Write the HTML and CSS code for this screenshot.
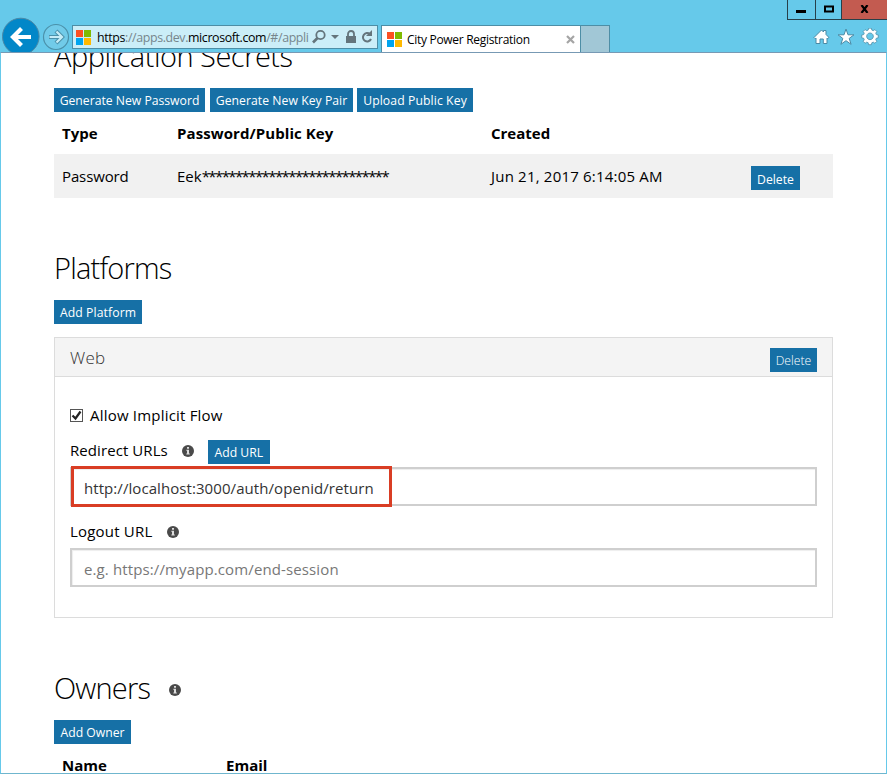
FILE: index.html
```
<!DOCTYPE html>
<html lang="en">
<head>
<meta charset="utf-8">
<title>City Power Registration</title>
<link rel="stylesheet" href="styles.css">
</head>
<body>
<svg width="0" height="0" class="defs">
  <symbol id="info" viewBox="0 0 12 12"><circle cx="6" cy="6" r="6" fill="#4a4a4a"/><path d="M5 2h2v1.700H5zM4.300 4.800H7v3.700h.8v1H4.300v-1H5V5.800h-.7z" fill="#ddd"/></symbol>
  <symbol id="ms" viewBox="0 0 15 15"><path fill="#fb5022" d="M0 0h7v7H0z"/><path fill="#7fba00" d="M8 0h7v7H8z"/><path fill="#00a4ef" d="M0 8h7v7H0z"/><path fill="#ffb900" d="M8 8h7v7H8z"/></symbol>
</svg>
<div class="window">
  <header class="chrome">
    <svg class="nav" width="72" height="52" viewBox="0 0 72 52">
      <circle cx="20.8" cy="36.5" r="18.3" fill="#0287c8" stroke="#4b88a6"/>
      <path d="M31 37H13M21.500 28.500L13 37l8.500 8.500" fill="none" stroke="#fff" stroke-width="4.200"/>
      <circle cx="56" cy="37" r="12.500" fill="#71cbe9" stroke="#4b91aa" stroke-width="1.200"/>
      <path d="M49 37h12M56 31l6 6-6 6" fill="none" stroke="#4b91aa" stroke-width="4.200"/>
      <path d="M49.500 37h12M56.500 31.500l5.500 5.500-5.500 5.500" fill="none" stroke="#c5edf8" stroke-width="2.200"/>
    </svg>
    <div class="address">
      <svg width="15" height="15"><use href="#ms"/></svg>
      <span class="url"><b>https</b>://apps.dev.<b>microsoft.com</b>/#/appli</span>
      <svg class="tools" width="64" height="16" viewBox="0 0 64 16" fill="none" stroke="#64757c">
        <circle cx="8.500" cy="6" r="4.200" stroke-width="1.800"/><path d="M5.500 9L1 13.500" stroke-width="2.600"/>
        <path d="M19 6h8l-4 4z" fill="#64757c" stroke="none"/>
        <path d="M34 7h10v7H34z" fill="#64757c" stroke="none"/><path d="M36 8V5a3 3 0 0 1 6 0v3" stroke-width="1.800"/>
        <path d="M58 5.200A4.200 4.200 0 1 0 59 10" stroke-width="2"/><path d="M60 1v6h-6z" fill="#64757c" stroke="none"/>
      </svg>
    </div>
    <div class="tab">
      <svg width="15" height="15"><use href="#ms"/></svg>
      <span class="tab-title">City Power Registration</span>
      <svg class="close" width="9" height="9" viewBox="0 0 9 9"><path d="M1 1l7 7M8 1L1 8" stroke="#a5a5a5" stroke-width="2.200"/></svg>
    </div>
    <div class="new-tab"></div>
    <div class="right">
      <div class="caption">
        <span class="cap min"><svg width="10" height="3"><path d="M0 0h10v3H0z"/></svg></span>
        <span class="cap max"><svg width="10" height="8"><path d="M1 1.500h8v5H1z" fill="none" stroke="#000" stroke-width="2"/></svg></span>
        <span class="cap shut"><svg width="9" height="8"><path d="M1.500 0l6 8M7.500 0l-6 8" stroke="#000" stroke-width="2.200"/></svg></span>
      </div>
      <svg class="actions" width="66" height="18" viewBox="0 0 66 18" fill="#fff" stroke="#4b8aa5">
        <path d="M1 9.500L8.500 2l2 2V2.500h2.500V6.500l3 3-1.500 1L14 10v5.500h-3.700V11H7v4.500H3V10l-.8.700z"/>
        <path d="M33 1l2 5.800h6l-4.800 3.600 1.900 5.900-5.100-3.600-5.100 3.600 1.900-5.900L25 6.800h6z"/>
        <path fill-rule="evenodd" d="M56 1h3l.4 2 1.500.6L62.600 2.500l2 2-1.100 1.700.6 1.500 2 .4v3l-2 .4-.6 1.500 1.100 1.700-2 2-1.700-1.100-1.500.6-.4 2h-3l-.4-2-1.500-.6-1.700 1.100-2-2 1.100-1.700-.6-1.500-2-.4v-3l2-.4.6-1.500L50.400 4.500l2-2 1.700 1.100 1.500-.6zM57.500 6a3.500 3.500 0 1 0 .01 0z" stroke-width=".8" transform="translate(1.800 -.8) scale(.96)"/>
      </svg>
    </div>
  </header>
  <main class="page">
    <section class="secrets">
      <h2><span class="t-secrets">Application Secrets</span></h2>
      <div class="buttons">
        <button class="btn w-pass">Generate New Password</button>
        <button class="btn w-pair">Generate New Key Pair</button>
        <button class="btn w-upload">Upload Public Key</button>
      </div>
      <div class="row head"><span class="h-type">Type</span><span class="h-key">Password/Public Key</span><span class="h-created">Created</span></div>
      <div class="row data"><span class="t-pass">Password</span><span>Eek<i class="stars">****************************</i></span><span class="date">Jun 21, 2017 6:14:05 AM</span><button class="btn w-del">Delete</button></div>
    </section>
    <section class="platforms">
      <h2><span class="t-platforms">Platforms</span></h2>
      <button class="btn w-platform">Add Platform</button>
      <div class="panel">
        <div class="panel-head"><span class="web">Web</span><button class="btn thin w-del2">Delete</button></div>
        <div class="panel-body">
          <label class="check"><span class="box"><svg width="11" height="11" viewBox="0 0 11 11"><path d="M1.500 5.500l3 3 5-7" fill="none" stroke="#222" stroke-width="2.200"/></svg></span><span class="t-allow">Allow Implicit Flow</span></label>
          <div class="field redirect"><span class="t-redirect">Redirect URLs</span><svg class="info" width="12" height="12"><use href="#info"/></svg><button class="btn w-url">Add URL</button></div>
          <div class="input"><span class="t-local">http://localhost:3000/auth/openid/return</span><div class="mark"></div></div>
          <div class="field logout"><span class="t-logout">Logout URL</span><svg class="info" width="12" height="12"><use href="#info"/></svg></div>
          <div class="input hint"><span class="t-hint">e.g. https://myapp.com/end-session</span></div>
        </div>
      </div>
    </section>
    <section class="owners">
      <h2><span class="t-owners">Owners</span><svg class="info" width="12" height="12"><use href="#info"/></svg></h2>
      <button class="btn w-owner">Add Owner</button>
      <div class="row head people"><span class="h-name">Name</span><span class="h-email">Email</span></div>
    </section>
  </main>
</div>
</body>
</html>
```

FILE: styles.css
```
* { box-sizing: border-box; }
body { margin: 0; font: 15px/20px "Open Sans", "Noto Sans", sans-serif; color: #000; overflow: hidden; }
.defs { position: absolute; }
svg { display: block; flex: none; }
span { white-space: nowrap; }
.window { width: 887px; height: 774px; background: #66c9ea; }
.chrome { height: 52px; display: flex; align-items: flex-start; }
.address { margin-top: 25px; width: 306px; height: 24px; border: 1px solid #4d8ea6; background: #cbeef8; display: flex; align-items: center; padding: 0 3px; font-size: 12.4px; color: #77868c; }
.address b { font-weight: 400; color: #000; }
.url { margin: 2px 0 0 6px; width: 211px; letter-spacing: -0.38px; }
.tools { margin-left: 4px; }
.tab { margin: 25px 0 0 3px; width: 200px; height: 27px; border: 1px solid #4d8ea6; border-bottom: 0; background: #fff; display: flex; align-items: center; padding: 0 5px; font-size: 12px; }
.tab-title { margin: 2px 0 0 5px; flex: 1; letter-spacing: -0.3px; }
.new-tab { margin-top: 25px; width: 29px; height: 27px; background: #a1c7d6; border: solid #4d8ea6; border-width: 1px 1px 0 0; }
.right { margin-left: auto; width: 100px; display: flex; flex-direction: column; align-items: flex-end; }
.caption { display: flex; height: 20px; border: solid #27404a; border-width: 0 0 1px 1px; }
.cap { display: flex; align-items: center; justify-content: center; height: 19px; padding-bottom: 1px; border-right: 1px solid #27404a; }
.min { width: 28px; padding-top: 5px; padding-right: 1px; }
.max { width: 26px; }
.shut { width: 45px; background: #c35b50; border-right: 0; }
.actions { margin: 8px 8px 0 0; }

.page { height: 722px; border: solid #66c9ea; border-width: 1px; border-top-color: #7799b4; border-bottom-color: #6fb6ce; background: #fff; padding: 0 53px; overflow: hidden; display: flow-root; }
section { margin-bottom: 50px; }
.secrets { margin-top: -17px; }
h2 { margin: 0 0 12px; height: 40px; font-weight: 300; font-size: 29px; line-height: 40px; display: flex; align-items: center; }
.t-secrets { letter-spacing: -0.5px; }
.t-platforms, .t-owners { letter-spacing: -0.8px; }
.buttons { display: flex; }
.btn { display: block; height: 24px; border: 0; padding: 1px 0 0; background: #1670a6; color: #fff; font: 12.2px/20px "Open Sans", sans-serif; white-space: nowrap; text-align: center; flex: none; }
.thin { font-weight: 300; }
.w-pass { width: 151px; margin-right: 5px; }
.w-pair { width: 143px; margin-right: 4px; letter-spacing: 0.05px; }
.w-upload { width: 116px; letter-spacing: 0.1px; }
.w-del { width: 49px; padding-top: 3px; }
.w-del2 { width: 47px; margin-top: 5px; padding-top: 2px; }
.w-platform { width: 88px; letter-spacing: 0.1px; }
.w-url { width: 62px; margin-left: 14px; }
.w-owner { width: 77px; }
.row { width: 779px; display: grid; grid-template-columns: 115px 314px 260px 1fr; padding-left: 8px; align-items: center; }
.head { height: 42px; font-weight: 700; }
.h-key { letter-spacing: 0.08px; }
.data { height: 44px; background: #f1f1f1; }
.data .btn { margin-top: 4px; }
.t-pass { letter-spacing: -0.12px; }
.stars { font-style: normal; letter-spacing: -1.6px; }
.date { letter-spacing: 0.2px; }
.panel { margin-top: 13px; width: 779px; height: 281px; border: 1px solid #dcdcdc; }
.panel-head { height: 39px; background: #f4f4f4; border-bottom: 1px solid #dcdcdc; padding: 0 15px; display: flex; align-items: center; justify-content: space-between; }
.web { font-size: 17px; font-weight: 300; color: #333; margin-top: 2px; letter-spacing: 0.3px; }
.panel-body { padding: 28px 15px 0; }
.check { display: flex; align-items: center; height: 20px; }
.t-allow { letter-spacing: 0.2px; }
.box { width: 13px; height: 13px; border: 1px solid #555; margin-right: 7px; }
.field { display: flex; align-items: center; }
.redirect { height: 24px; margin: 15px 0 3px; }
.t-redirect { margin-top: -4px; letter-spacing: 0.08px; }
.field .info { margin-left: 14px; margin-top: -3px; }
.logout { height: 20px; margin: 16px 0 6px; }
.t-logout { margin-top: -2px; letter-spacing: 0.2px; }
.logout .info { margin-top: 0; }
.input { position: relative; height: 39px; border: 2px solid #cfcfcf; box-shadow: inset 1px 1px 1px #eee; padding: 9px 12px 0; line-height: 20px; color: #333; }
.t-local { letter-spacing: 0.07px; }
.hint { color: #777; letter-spacing: 0.12px; }
.mark { position: absolute; left: -1px; top: -3px; width: 321px; height: 41px; border: 3px solid #d93d24; }
.owners h2 .info { margin: 3px 0 0 19px; }
.people { grid-template-columns: 164px 1fr; }
```
